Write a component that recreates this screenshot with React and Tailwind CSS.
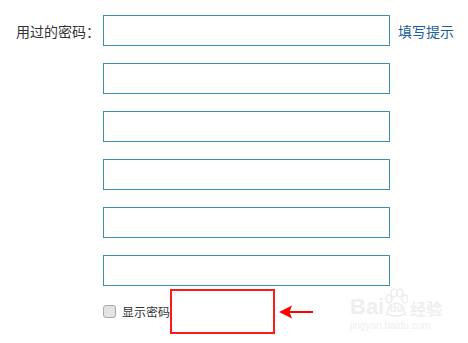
import React from "react";

const cjk = { fontFamily: '"Noto Sans CJK SC", "Liberation Sans", sans-serif' };

function Box() {
  return <div className="w-[287px] h-[31px] border border-[#3a91a8] bg-white" />;
}

export default function App() {
  return (
    <div className="relative w-[468px] h-[343px] bg-white overflow-hidden" style={cjk}>
      <div className="flex flex-col pt-[15px]">
        <div className="flex items-center">
          <div className="w-[103px] pl-[16px] text-[14px] leading-none text-[#333]">用过的密码：</div>
          <Box />
          <div className="ml-[8px] text-[14px] leading-none text-[#1f5f99]">填写提示</div>
        </div>
        <div className="ml-[103px] mt-[17px]"><Box /></div>
        <div className="ml-[103px] mt-[17px]"><Box /></div>
        <div className="ml-[103px] mt-[17px]"><Box /></div>
        <div className="ml-[103px] mt-[17px]"><Box /></div>
        <div className="ml-[103px] mt-[17px]"><Box /></div>
        <div className="ml-[103px] mt-[3px] flex items-center">
          <div className="w-[13px] h-[13px] rounded-[3px] border border-[#a9a9a9] bg-[#e4e4e4]" />
          <div className="ml-[6px] text-[12px] leading-none text-[#333]">显示密码</div>
          <div className="w-[105px] h-[45px] border-2 border-[#ff1a1a]" />
          <svg className="ml-[4px]" width="36" height="16" viewBox="0 0 36 16">
            <polygon points="0,8 13,1.5 10.5,8 13,14.5" fill="#ff0000" />
            <line x1="9" y1="8" x2="34" y2="8" stroke="#ff0000" strokeWidth="2" />
          </svg>
        </div>
      </div>
      <div className="absolute left-[350px] top-[288px] flex flex-col items-start text-[#efefef] pointer-events-none">
        <div className="flex items-end">
          <span className="text-[22px] font-bold leading-none" style={{ fontFamily: '"Liberation Sans", sans-serif' }}>Bai</span>
          <div className="relative w-[24px] h-[30px] flex items-end justify-center">
            <svg className="absolute top-0 left-0" width="24" height="30" viewBox="0 0 24 30">
              <ellipse cx="5" cy="11" rx="3" ry="4" fill="none" stroke="#ececec" strokeWidth="1.5" />
              <ellipse cx="10" cy="5" rx="3" ry="4" fill="none" stroke="#ececec" strokeWidth="1.5" />
              <ellipse cx="16" cy="5" rx="3" ry="4" fill="none" stroke="#ececec" strokeWidth="1.5" />
              <ellipse cx="21" cy="11" rx="3" ry="4" fill="none" stroke="#ececec" strokeWidth="1.5" />
              <path d="M3 26 Q4 16 12 15 Q20 16 21 26 Q12 30 3 26 Z" fill="none" stroke="#ececec" strokeWidth="1.5" />
            </svg>
            <span className="relative text-[11px] font-bold leading-none mb-[4px]" style={{ fontFamily: '"Liberation Sans", sans-serif' }}>du</span>
          </div>
          <span className="ml-[2px] text-[16px] font-bold leading-none mb-[2px]">经验</span>
        </div>
        <span className="text-[10px] leading-none mt-[3px]" style={{ fontFamily: '"Liberation Sans", sans-serif' }}>jingyan.baidu.com</span>
      </div>
    </div>
  );
}
